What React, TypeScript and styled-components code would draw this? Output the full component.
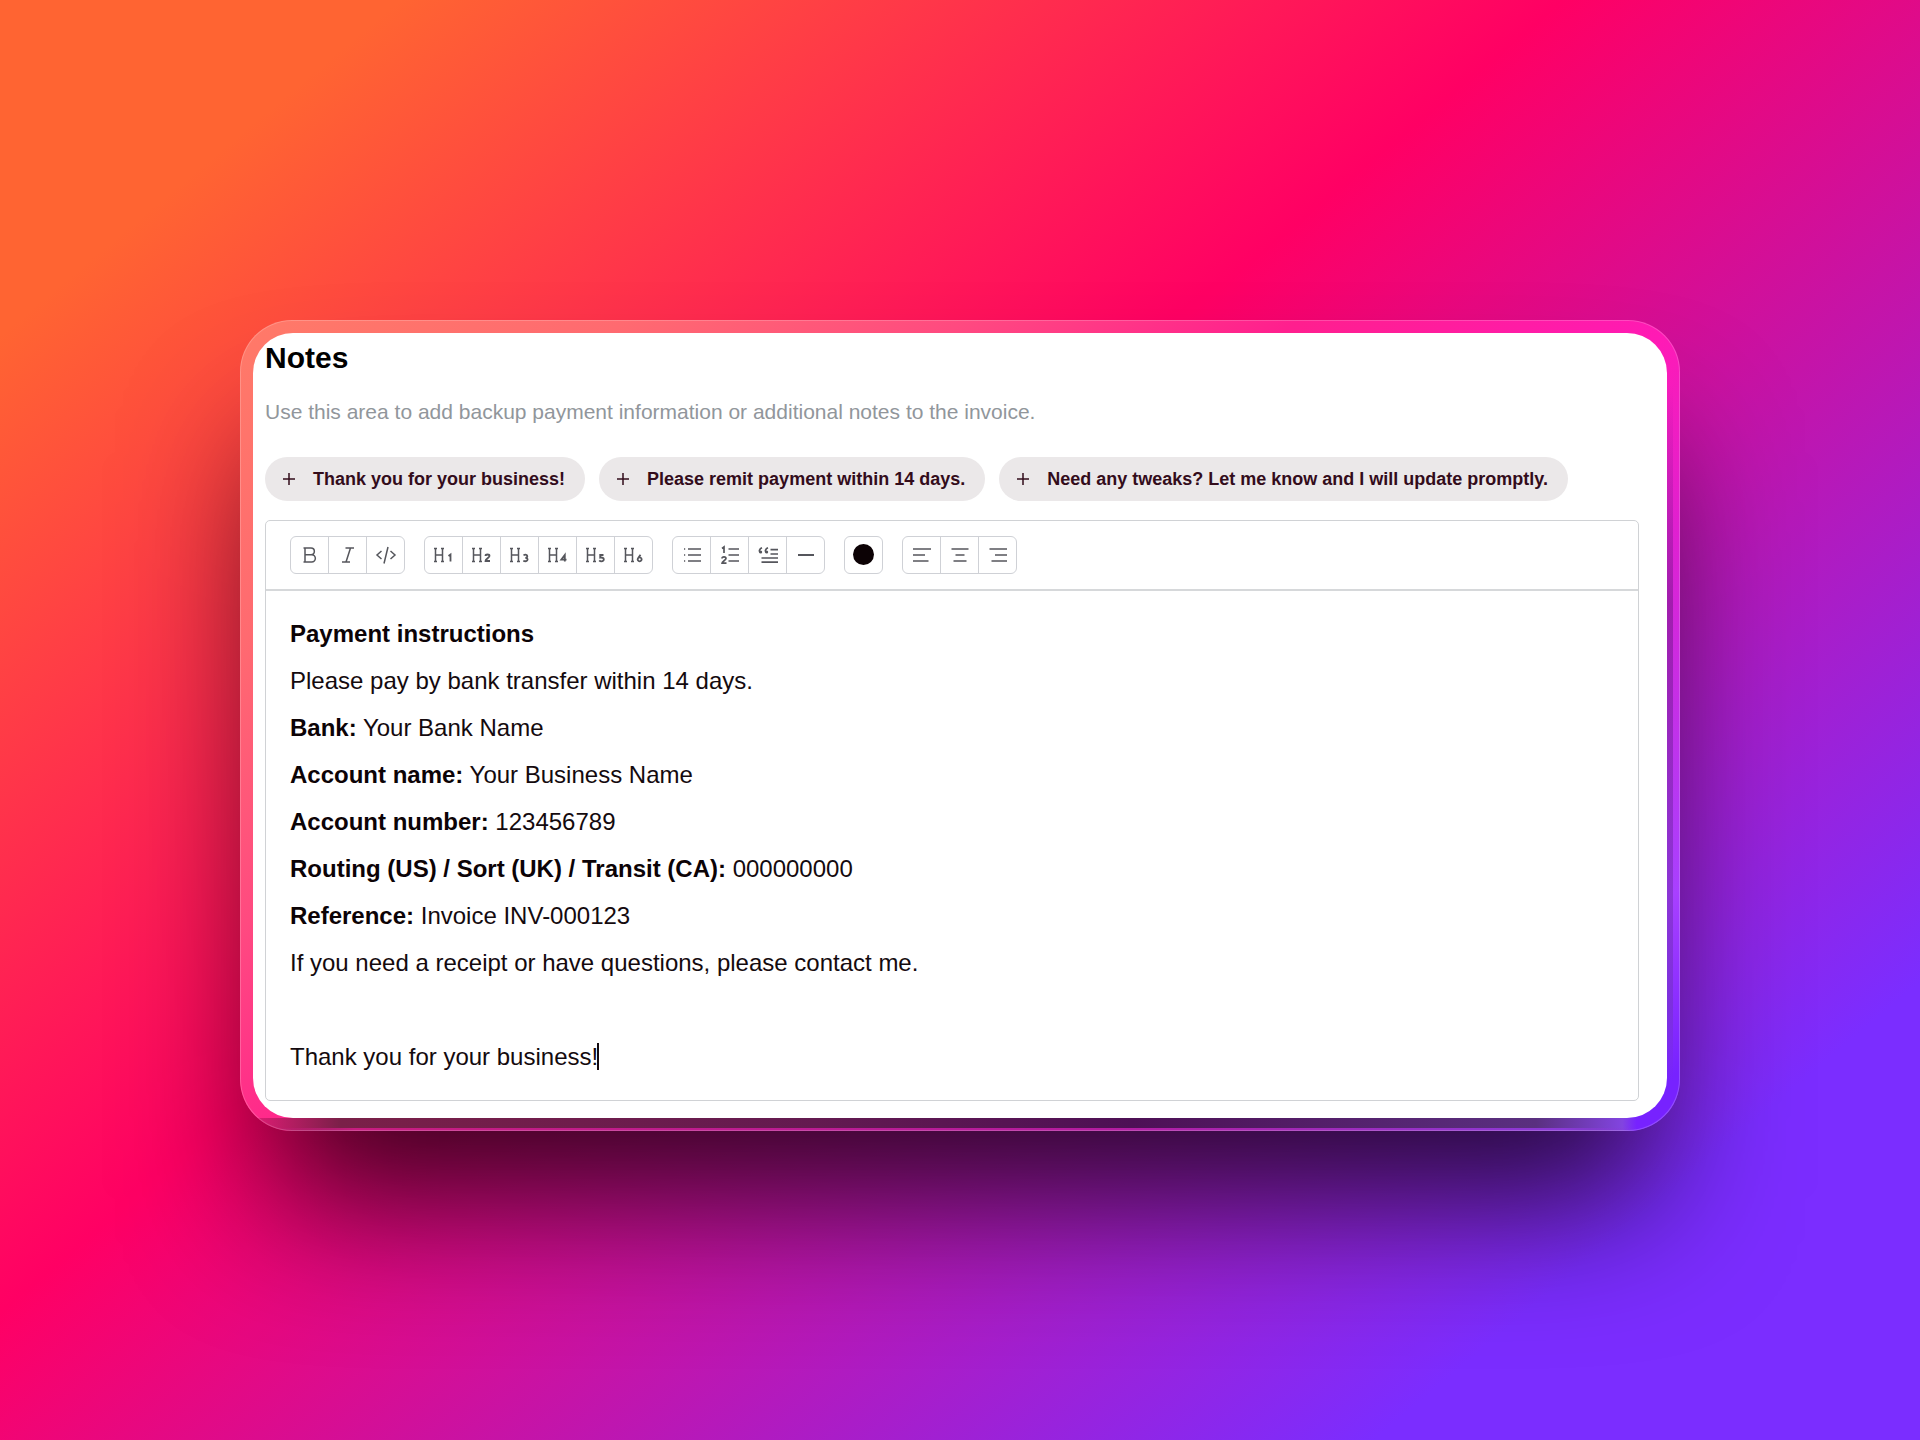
import React from "react";
import styled, { createGlobalStyle } from "styled-components";

const GlobalStyle = createGlobalStyle`
  *, *::before, *::after { box-sizing: border-box; }
  body { margin: 0; font-family: "Liberation Sans", Arial, Helvetica, sans-serif; }
`;

const Page = styled.main`
  min-height: 100vh;
  display: flex;
  align-items: center;
  justify-content: center;
  padding: 50px 0 40px;
  background: linear-gradient(140deg, #ff6432 11%, #ff0064 43%, #7b2dff 85%);
`;

const Frame = styled.div`
  width: 75%;
  padding: 12px;
  border: 1px solid rgba(255, 255, 255, 0.2);
  border-radius: 52px;
  background:
    linear-gradient(90deg, transparent 2%, #c81d80 8%, #b41ca0 60%, #8a3ad8 92%, transparent 97%) bottom / 100% 3px no-repeat,
    linear-gradient(90deg, rgba(200, 20, 100, 0.6) 1%, #7a2048 7%, #631a50 40%, #4d1055 62%, #5a3080 90%, #8244e0 96%, transparent 97%) bottom / 100% 13px no-repeat,
    linear-gradient(180deg, transparent 8%, rgba(110, 20, 130, 0.5) 35%, rgba(110, 50, 190, 0.5) 85%, transparent 94%) right 7px top / 6px 100% no-repeat,
    linear-gradient(140deg, #ff7a68 0%, #ff6a70 16%, #ff4a80 30%, #ff1f8e 44%, #ff1ab5 60%, #e020d0 70%, #a840ff 88%, #7722ff 97%);
  background-origin: border-box;
  box-shadow: 0 100px 140px -30px rgba(0, 0, 0, 0.75);
`;

const Card = styled.section`
  padding: 7px 28px 17px 12px;
  border-radius: 40px;
  background: #fff;
`;

const Title = styled.h1`
  margin: 0;
  font-size: 30px;
  line-height: 36px;
  font-weight: 700;
  color: #000;
`;

const Hint = styled.p`
  margin: 24px 0 33px;
  font-size: 21px;
  line-height: 24px;
  color: #91969b;
`;

const Chips = styled.div`
  display: flex;
  flex-wrap: wrap;
  gap: 14px;
  margin-bottom: 19px;
`;

const Chip = styled.button`
  display: inline-flex;
  align-items: center;
  gap: 16px;
  height: 44px;
  padding: 0 20px 0 16px;
  border: 0;
  border-radius: 22px;
  background: #ebe8e9;
  color: #330c1b;
  font: 700 18px/24px "Liberation Sans", Arial, sans-serif;
`;

const Editor = styled.div`
  border: 1px solid #d0d2d5;
  border-radius: 5px;
`;

const Toolbar = styled.div`
  display: flex;
  flex-wrap: wrap;
  gap: 19px;
  padding: 15px 24px;
  border-bottom: 2px solid #d6d8da;
`;

const Group = styled.div`
  display: flex;
  border: 1px solid #cfd1d6;
  border-radius: 6px;
`;

const Tool = styled.button`
  display: grid;
  place-items: center;
  width: 37px;
  height: 36px;
  padding: 0;
  border: 0;
  background: transparent;
  color: #55565c;

  & + & {
    width: 38px;
    border-left: 1px solid #cfd1d6;
  }
`;

const Swatch = styled.span`
  width: 21px;
  height: 21px;
  border-radius: 50%;
  background: #0c0205;
`;

const Body = styled.div`
  padding: 19px 24px 20px;
  font-size: 24px;
  line-height: 47px;
  color: #140a0e;
  outline: none;

  p { margin: 0; min-height: 47px; }
  strong { color: #0c0306; }
`;

const Caret = styled.span`
  display: inline-block;
  width: 2px;
  height: 27px;
  margin-left: -1px;
  vertical-align: -5px;
  background: #140a0e;
`;

const Icon = ({ children, width = 1.5 }: { children: React.ReactNode; width?: number }) => (
  <svg width="24" height="24" viewBox="0 0 24 24" fill="none" stroke="currentColor" strokeWidth={width} aria-hidden="true">
    {children}
  </svg>
);

const digits: Record<number, string> = {
  1: "M16.5 13l2-1.500v7",
  2: "M15.500 13c0-2 4-2 4 0 0 1.700-4 3-4 5h4.500",
  3: "M15.500 12.200c2-1 3.800-.5 3.800 1 0 1-.8 1.600-2 1.600 1.500 0 2.300.7 2.300 1.700 0 1.700-2.300 2.200-4.300 1.200",
  4: "M18.800 18.500v-6.500l-3.500 4.700h5.200",
  5: "M19.500 12h-3.300v2.600c4.600-.7 4.600 3.700 1.200 3.700-.9 0-1.700-.4-2.200-1",
  6: "M18.500 11.700l-2.500 3.500M17.700 14.300a2 2 0 1 1-.1 0z",
};

const Heading = ({ level }: { level: number }) => (
  <Icon>
    <path d="M3.500 5.500v13M10.500 5.500v13M3.500 12h7M2 5.500h3M9 5.500h3M2 18.500h3M9 18.500h3" />
    <path d={digits[level]} strokeWidth="1.800" />
  </Icon>
);

const groups: { label: string; icon: React.ReactNode }[][] = [
  [
    { label: "Bold", icon: <Icon><path d="M5.500 5h7.500a3.200 3.200 0 0 1 0 6.700H7M13 11.700h.7a3.400 3.400 0 0 1 0 7.300H5.500M7 5v14" /></Icon> },
    { label: "Italic", icon: <Icon><path d="M9.500 5H18M6 19h8M14.500 5l-4.500 14" /></Icon> },
    { label: "Code", icon: <Icon><path d="M7.500 8l-4.500 4 4.500 4M16.500 8l4.500 4-4.500 4M14 4l-4 16.500" /></Icon> },
  ],
  [1, 2, 3, 4, 5, 6].map((n) => ({ label: `Heading ${n}`, icon: <Heading level={n} /> })),
  [
    { label: "Bullet list", icon: <Icon><path d="M8 6h13M8 12h13M8 18h13" /><path d="M4 6h1.200M4 12h1.200M4 18h1.200" /></Icon> },
    { label: "Numbered list", icon: <Icon width={1.7}><path d="M10.500 6H21M10.500 12H21M10.500 18H21M4 5.500L6 4v6M4 15.500c0-2.200 4-2.200 4 0 0 1.700-4 2.800-4 4.700h4.500" /></Icon> },
    { label: "Quote", icon: <Icon width={1.7}><path d="M14.500 6.700H22M14.500 11H22M5.500 15H22M5.500 19.200H22" /><path d="M6 4.800C3.500 5.800 2.700 8 4.200 9.500M12 4.800c-2.500 1-3.300 3.200-1.800 4.700" /><circle cx="4.700" cy="9" r="1.500" fill="currentColor" stroke="none" /><circle cx="10.700" cy="9" r="1.500" fill="currentColor" stroke="none" /></Icon> },
    { label: "Divider", icon: <Icon width={2}><path d="M4 12h16" /></Icon> },
  ],
  [{ label: "Text colour", icon: <Swatch /> }],
  [
    { label: "Align left", icon: <Icon><path d="M3 6h18M3 12h12M3 18h15.500" /></Icon> },
    { label: "Align centre", icon: <Icon><path d="M3.500 6h17M7.500 12h9M5.500 18h13" /></Icon> },
    { label: "Align right", icon: <Icon><path d="M3.500 6H21M9 12h12M5.500 18H21" /></Icon> },
  ],
];

const snippets = [
  "Thank you for your business!",
  "Please remit payment within 14 days.",
  "Need any tweaks? Let me know and I will update promptly.",
];

const details = [
  ["Bank:", "Your Bank Name"],
  ["Account name:", "Your Business Name"],
  ["Account number:", "123456789"],
  ["Routing (US) / Sort (UK) / Transit (CA):", "000000000"],
  ["Reference:", "Invoice INV-000123"],
];

export default function App() {
  return (
    <>
      <GlobalStyle />
      <Page>
        <Frame>
          <Card>
            <Title>Notes</Title>
            <Hint>Use this area to add backup payment information or additional notes to the invoice.</Hint>
            <Chips>
              {snippets.map((text) => (
                <Chip key={text} type="button">
                  <svg width="16" height="16" viewBox="0 0 16 16" stroke="currentColor" strokeWidth="1.500" aria-hidden="true">
                    <path d="M8 2v12M2 8h12" />
                  </svg>
                  {text}
                </Chip>
              ))}
            </Chips>
            <Editor>
              <Toolbar role="toolbar" aria-label="Formatting">
                {groups.map((tools) => (
                  <Group key={tools[0].label}>
                    {tools.map(({ label, icon }) => (
                      <Tool key={label} type="button" aria-label={label}>{icon}</Tool>
                    ))}
                  </Group>
                ))}
              </Toolbar>
              <Body role="textbox" aria-multiline="true" aria-label="Notes" contentEditable suppressContentEditableWarning spellCheck={false}>
                <p><strong>Payment instructions</strong></p>
                <p>Please pay by bank transfer within 14 days.</p>
                {details.map(([name, value]) => (
                  <p key={name}><strong>{name}</strong> {value}</p>
                ))}
                <p>If you need a receipt or have questions, please contact me.</p>
                <p />
                <p>Thank you for your business!<Caret /></p>
              </Body>
            </Editor>
          </Card>
        </Frame>
      </Page>
    </>
  );
}
